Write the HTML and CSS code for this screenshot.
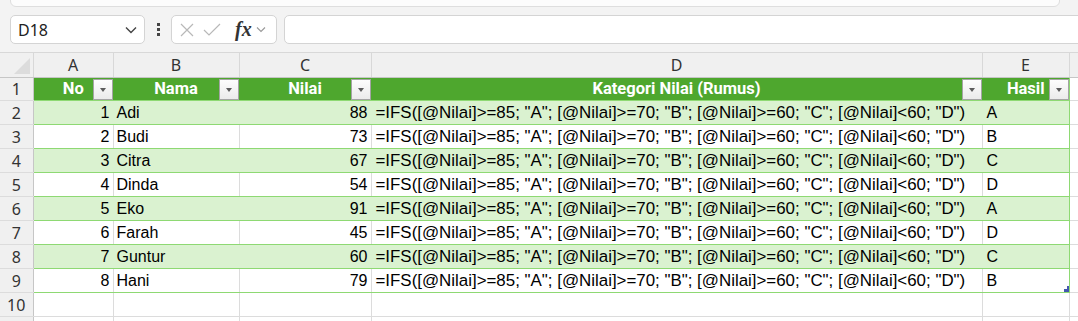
FILE: index.html
```html
<!DOCTYPE html>
<html lang="en">
  <head>
    <meta charset="UTF-8" />
    <meta name="viewport" content="width=device-width, initial-scale=1.0" />
    <link rel="stylesheet" href="styles.css">
    <title>Kategori Nilai</title>
  </head>
  <body>
    <div class="toolbar">
      <div class="ribbonEdge"></div>
      <div class="formulaRow">
        <div class="nameBox">
          <span>D18</span>
          <svg width="12" height="8" viewBox="0 0 12 8"><path d="M1 1.5 L6 6.5 L11 1.5" fill="none" stroke="#444" stroke-width="1.4"/></svg>
        </div>
        <div class="dots"><i></i><i></i><i></i></div>
        <div class="fnBox">
          <svg width="14" height="14" viewBox="0 0 14 14"><path d="M1 1 L13 13 M13 1 L1 13" stroke="#b8b8b8" stroke-width="1.2"/></svg>
          <svg width="18" height="14" viewBox="0 0 18 14"><path d="M1 7 L6 12 L17 1" fill="none" stroke="#b8b8b8" stroke-width="1.2"/></svg>
          <span class="fx">fx</span>
          <svg width="10" height="7" viewBox="0 0 10 7"><path d="M1 1.5 L5 5.5 L9 1.5" fill="none" stroke="#999" stroke-width="1.1"/></svg>
        </div>
        <div class="formulaBox"></div>
      </div>
    </div>

    <table class="sheet">
      <colgroup>
        <col class="cRh"><col class="cA"><col class="cB"><col class="cC"><col class="cD"><col class="cE"><col class="cF">
      </colgroup>
      <thead>
        <tr class="letters">
          <th class="corner"><span class="tri"></span></th>
          <th>A</th><th>B</th><th>C</th><th>D</th><th>E</th><th></th>
        </tr>
      </thead>
      <tbody id="rows">
        <tr class="hdr">
          <th class="rh">1</th>
          <td>No<span class="flt"></span></td>
          <td>Nama<span class="flt"></span></td>
          <td>Nilai<span class="flt"></span></td>
          <td>Kategori Nilai (Rumus)<span class="flt"></span></td>
          <td class="last">Hasil<span class="flt"></span></td>
          <td class="out"></td>
        </tr>
      </tbody>
    </table>

    <script>
      var data = [
        [1, "Adi", 88, "A"],
        [2, "Budi", 73, "B"],
        [3, "Citra", 67, "C"],
        [4, "Dinda", 54, "D"],
        [5, "Eko", 91, "A"],
        [6, "Farah", 45, "D"],
        [7, "Guntur", 60, "C"],
        [8, "Hani", 79, "B"]
      ];
      var rumus = '=IFS([@Nilai]>=85; "A"; [@Nilai]>=70; "B"; [@Nilai]>=60; "C"; [@Nilai]<60; "D")';
      var body = document.getElementById("rows");

      data.forEach(function (d, i) {
        var tr = document.createElement("tr");
        tr.className = i % 2 === 0 ? "band" : "plain";
        tr.innerHTML =
          '<th class="rh">' + (i + 2) + "</th>" +
          '<td class="num">' + d[0] + "</td>" +
          "<td>" + d[1] + "</td>" +
          '<td class="num">' + d[2] + "</td>" +
          '<td class="formula"></td>' +
          '<td class="last">' + d[3] + (i === data.length - 1 ? '<span class="handle"></span>' : "") + "</td>" +
          '<td class="out"></td>';
        tr.querySelector(".formula").textContent = rumus;
        body.appendChild(tr);
      });

      // row 10 is empty, row 11 only peeks in at the bottom edge
      ["10", ""].forEach(function (label) {
        var empty = document.createElement("tr");
        empty.className = "blank";
        empty.innerHTML = '<th class="rh">' + label + "</th><td></td><td></td><td></td><td></td><td></td><td></td>";
        body.appendChild(empty);
      });
    </script>
  </body>
</html>
```

FILE: styles.css
```css
body {
  margin: 0;
  background-color: #f3f3f3;
  font-family: "Liberation Sans", Arial, sans-serif;
  overflow: hidden;
  width: 1078px;
  height: 321px;
}

.toolbar {
  height: 52px;
  position: relative;
}

.ribbonEdge {
  position: absolute;
  left: 10px;
  right: 18px;
  top: -6px;
  height: 11px;
  background-color: #fcfcfc;
  border: 1px solid #dedede;
  border-radius: 6px;
}

.formulaRow {
  display: flex;
  align-items: center;
  padding: 15px 0 0 10px;
}

.nameBox {
  width: 135px;
  height: 29px;
  box-sizing: border-box;
  background-color: white;
  border: 1px solid #d4d4d4;
  border-radius: 5px;
  display: flex;
  align-items: center;
  justify-content: space-between;
  padding: 0 7px 0 7px;
  font-family: "Noto Sans", sans-serif;
  font-size: 16px;
  color: #222;
}

.dots {
  width: 26px;
  display: flex;
  flex-direction: column;
  align-items: center;
  gap: 2px;
}

.dots i {
  width: 3px;
  height: 3px;
  background-color: #444;
}

.fnBox {
  width: 106px;
  height: 29px;
  box-sizing: border-box;
  background-color: white;
  border: 1px solid #d4d4d4;
  border-radius: 5px;
  display: flex;
  align-items: center;
  padding: 0 4px 0 8px;
  gap: 9px;
}

.fx {
  font-family: "Liberation Serif", serif;
  font-style: italic;
  font-weight: bold;
  font-size: 20px;
  color: #333;
  margin-left: 5px;
  margin-right: -5px;
}

.formulaBox {
  flex: 1;
  margin-left: 7px;
  margin-right: -20px;
  height: 29px;
  box-sizing: border-box;
  background-color: white;
  border: 1px solid #d4d4d4;
  border-radius: 5px;
}

.sheet {
  border-collapse: collapse;
  table-layout: fixed;
  width: 1090px;
  background-color: white;
}

.cRh { width: 33px; }
.cA { width: 80px; }
.cB { width: 126px; }
.cC { width: 132px; }
.cD { width: 611px; }
.cE { width: 87px; }
.cF { width: 21px; }

.sheet tr {
  height: 24px;
}

.sheet th,
.sheet td {
  padding: 0 3px;
  border-right: 1px solid #dcdcdc;
  border-bottom: 1px solid #dcdcdc;
  white-space: nowrap;
  overflow: hidden;
  font-weight: normal;
  line-height: 22px;
}

.sheet tr.letters {
  height: 25px;
}

.letters th {
  background-color: #f0f0f0;
  border-top: 1px solid #d8d8d8;
  border-bottom: 1px solid #c6c6c6;
  border-right: 1px solid #d8d8d8;
  font-family: "Noto Sans", sans-serif;
  font-size: 16px;
  color: #333;
  text-align: center;
}

.corner {
  position: relative;
}

.tri {
  position: absolute;
  right: 3px;
  bottom: 3px;
  width: 0;
  height: 0;
  border-left: 16px solid transparent;
  border-bottom: 16px solid #dcdcdc;
}

.sheet .rh {
  background-color: #f0f0f0;
  border-right: 1px solid #c6c6c6;
  border-bottom: 1px solid #dcdcdc;
  font-family: "Noto Sans", sans-serif;
  font-size: 16px;
  color: #333;
  text-align: center;
  padding: 0;
}

.sheet td {
  font-size: 16px;
  color: #000;
}

.sheet td.num {
  text-align: right;
}

.sheet td.formula {
  padding-left: 4px;
  font-size: 16.9px;
}

.sheet td.last {
  padding-left: 4px;
  border-right: 1px solid #8ed973;
  position: relative;
}

.sheet tr.hdr {
  height: 23px;
}

.hdr td {
  background-color: #4ea72e;
  color: white;
  font-weight: bold;
  font-family: "Roboto", sans-serif;
  font-size: 16.5px;
  text-align: center;
  border-right: none;
  border-bottom: 1px solid #8ed973;
  position: relative;
}

.hdr td.last {
  border-right: 1px solid #8ed973;
}

.flt {
  position: absolute;
  right: 0;
  top: 1px;
  width: 20px;
  height: 21px;
  box-sizing: border-box;
  border: 1px solid #a4a4a4;
  background: linear-gradient(#fdfdfd, #ebebeb);
}

.flt::after {
  content: "";
  position: absolute;
  left: 6px;
  top: 8px;
  border-left: 3.5px solid transparent;
  border-right: 3.5px solid transparent;
  border-top: 4px solid #5c5c5c;
}

.band td {
  background-color: #daf2d0;
  border-right-color: #daf2d0;
  border-bottom: 1px solid #8ed973;
}

.plain td {
  border-bottom: 1px solid #8ed973;
}

.band td.last,
.plain td.last {
  border-right: 1px solid #8ed973;
}

.sheet td.out {
  background-color: white;
  border-bottom: 1px solid #dcdcdc;
  border-right: none;
}

.blank td {
  border-bottom: 1px solid #dcdcdc;
}

.handle {
  position: absolute;
  right: -1px;
  bottom: -1px;
  width: 6px;
  height: 4px;
  background-color: #4458b0;
}

.handle::before {
  content: "";
  position: absolute;
  right: 0;
  bottom: 0;
  width: 3px;
  height: 7px;
  background-color: #4458b0;
}
```
